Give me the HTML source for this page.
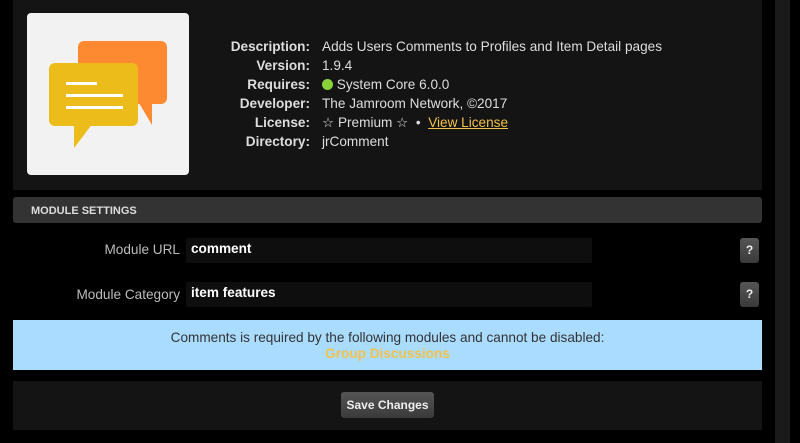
<!DOCTYPE html>
<html><head><style>
body{margin:0;width:800px;height:443px;background:#000;font-family:"Liberation Sans",Arial,sans-serif;position:relative;overflow:hidden}
.a{position:absolute}
.lbl{position:absolute;right:490px;font-weight:bold;color:#ddd;font-size:13.6px;text-align:right}
.val{position:absolute;left:322px;color:#ddd;font-size:13.6px;white-space:nowrap}
.q{position:absolute;left:740px;width:19px;height:25px;background:linear-gradient(#555,#3a3a3a);border-radius:3px;color:#eee;font-weight:bold;font-size:12px;text-align:center;line-height:25px}
.inp{position:absolute;left:186px;width:406px;height:25px;background:#0e0e0e;border-radius:2px;color:#fff;font-weight:bold;font-size:13.6px;line-height:22px;padding-left:5px;box-sizing:border-box}
</style></head><body>
<div class="a" style="left:775px;top:0;width:15px;height:443px;background:#1a1a1a"></div>
<div class="a" style="left:13px;top:0;width:749px;height:190px;background:#141414"></div>
<div class="a" style="left:27px;top:13px;width:162px;height:162px;background:#f2f2f2;border-radius:4px">
<svg width="162" height="162" viewBox="0 0 162 162">
<rect x="51" y="28" width="89" height="63" rx="6" fill="#fd8a30"/>
<polygon points="112,90 125,90 125,112" fill="#fd8a30"/>
<rect x="22" y="50" width="89" height="63" rx="6" fill="#ecbc1b"/>
<polygon points="47,110 66,110 47,135" fill="#ecbc1b"/>
<rect x="39" y="69" width="31" height="3" fill="#fff"/>
<rect x="39" y="81" width="57" height="3" fill="#fff"/>
<rect x="39" y="93" width="57" height="3" fill="#fff"/>
</svg></div>
<div class="lbl" style="top:39px">Description:</div><div class="val" style="top:39px">Adds Users Comments to Profiles and Item Detail pages</div>
<div class="lbl" style="top:58px">Version:</div><div class="val" style="top:58px">1.9.4</div>
<div class="lbl" style="top:77px">Requires:</div><div class="val" style="top:77px"><span style="display:inline-block;width:11px;height:11px;border-radius:50%;background:#8bd13a;vertical-align:-1px"></span> System Core 6.0.0</div>
<div class="lbl" style="top:96px">Developer:</div><div class="val" style="top:96px">The Jamroom Network, ©2017</div>
<div class="lbl" style="top:115px">License:</div><div class="val" style="top:115px">☆ Premium ☆ &nbsp;• &nbsp;<span style="color:#f3c24a;text-decoration:underline">View License</span></div>
<div class="lbl" style="top:134px">Directory:</div><div class="val" style="top:134px">jrComment</div>
<div class="a" style="left:13px;top:197px;width:749px;height:26px;background:#333;border-radius:3px;color:#ddd;font-weight:bold;font-size:11px;line-height:28px;padding-left:18px;box-sizing:border-box">MODULE SETTINGS</div>
<div class="a" style="right:620px;top:242px;color:#bbb;font-size:13.6px">Module URL</div>
<div class="inp" style="top:238px">comment</div><div class="q" style="top:238px">?</div>
<div class="a" style="right:620px;top:287px;color:#bbb;font-size:13.6px">Module Category</div>
<div class="inp" style="top:282px">item features</div><div class="q" style="top:282px">?</div>
<div class="a" style="left:13px;top:320px;width:749px;height:50px;background:#aadcff;text-align:center;font-size:13.6px;color:#333;line-height:16px;padding-top:10px;box-sizing:border-box">Comments is required by the following modules and cannot be disabled:<br><b style="color:#f3c24a">Group Discussions</b></div>
<div class="a" style="left:13px;top:381px;width:749px;height:49px;background:#141414"></div>
<div class="a" style="left:341px;top:392px;width:93px;height:26px;background:linear-gradient(#555,#3a3a3a);border-radius:3px;color:#eee;font-weight:bold;font-size:12px;text-align:center;line-height:26px">Save Changes</div>
</body></html>
